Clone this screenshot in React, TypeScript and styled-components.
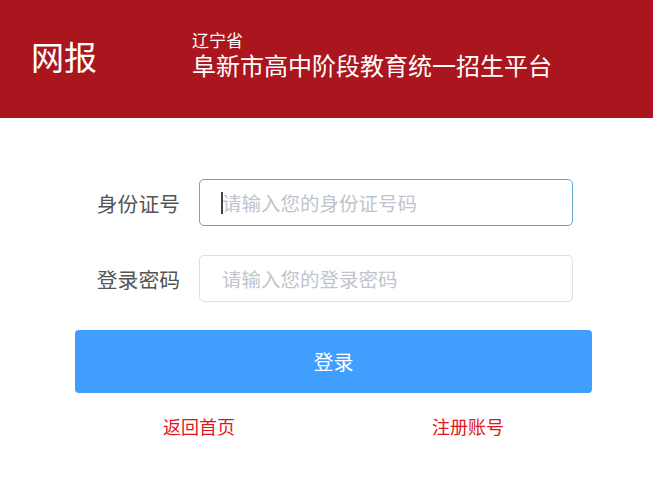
import styled, { createGlobalStyle } from "styled-components";

const GlobalStyle = createGlobalStyle`
  html, body {
    margin: 0;
    padding: 0;
    background: #ffffff;
    font-family: "Noto Sans CJK SC", "Noto Sans", sans-serif;
  }
  * {
    box-sizing: border-box;
  }
`;

function App() {
  return (
    <Page>
      <GlobalStyle />
      <Header>
        <Brand>网报</Brand>
        <TitleBox>
          <Province>辽宁省</Province>
          <Title>阜新市高中阶段教育统一招生平台</Title>
        </TitleBox>
      </Header>
      <Form>
        <FieldRow>
          <Label>身份证号</Label>
          <InputWrap>
            <Input focused placeholder="请输入您的身份证号码" readOnly />
            <Caret />
          </InputWrap>
        </FieldRow>
        <FieldRow>
          <Label>登录密码</Label>
          <InputWrap>
            <Input type="password" placeholder="请输入您的登录密码" readOnly />
          </InputWrap>
        </FieldRow>
        <LoginButton type="button">登录</LoginButton>
        <LinkRow>
          <TextLink href="#">返回首页</TextLink>
          <TextLink href="#">注册账号</TextLink>
        </LinkRow>
      </Form>
    </Page>
  );
}

type InputProps = {
  focused?: boolean;
};

const Page = styled.div`
  width: 653px;
  min-height: 497px;
  background: #ffffff;
`;

const Header = styled.header`
  height: 118px;
  background: #ab151d;
  display: flex;
  align-items: center;
  color: #ffffff;
  padding-left: 31px;
`;

const Brand = styled.div`
  font-size: 33px;
  line-height: 1;
  width: 161px;
  margin-top: -6px;
`;

const TitleBox = styled.div`
  display: flex;
  flex-direction: column;
  margin-top: -6px;
`;

const Province = styled.div`
  font-size: 17px;
  line-height: 18px;
`;

const Title = styled.div`
  font-size: 24px;
  line-height: 32px;
  white-space: nowrap;
`;

const Form = styled.div`
  width: 517px;
  margin: 61px 0 0 75px;
  display: flex;
  flex-direction: column;
`;

const FieldRow = styled.div`
  display: flex;
  align-items: center;
  margin-bottom: 29px;
`;

const Label = styled.label`
  width: 124px;
  padding-right: 19px;
  text-align: right;
  font-size: 20.8px;
  color: #555555;
  white-space: nowrap;
`;

const InputWrap = styled.div`
  position: relative;
  width: 374px;
`;

const Input = styled.input.withConfig({
  shouldForwardProp: (prop) => prop !== "focused",
})<InputProps>`
  width: 100%;
  height: 47px;
  border: 1px solid ${(props) => (props.focused ? "#5ea5dc" : "#dcdfe6")};
  border-radius: 5px;
  padding: 0 22px;
  font-family: "Noto Sans CJK SC", "Noto Sans", sans-serif;
  font-size: 19.5px;
  color: #333333;
  outline: none;
  background: #ffffff;

  &::placeholder {
    color: #c0c4cc;
  }
`;

const Caret = styled.span`
  position: absolute;
  left: 22px;
  top: 13px;
  width: 2px;
  height: 22px;
  background: #444444;
`;

const LoginButton = styled.button`
  height: 63px;
  margin-top: -1px;
  border: none;
  border-radius: 4px;
  background: #409eff;
  color: #ffffff;
  font-family: "Noto Sans CJK SC", "Noto Sans", sans-serif;
  font-size: 20px;
  cursor: pointer;
`;

const LinkRow = styled.div`
  display: flex;
  justify-content: space-between;
  padding: 0 88px;
  margin-top: 19px;
`;

const TextLink = styled.a`
  font-size: 18px;
  line-height: 28px;
  color: #e3141c;
  text-decoration: none;
`;

export default App;
